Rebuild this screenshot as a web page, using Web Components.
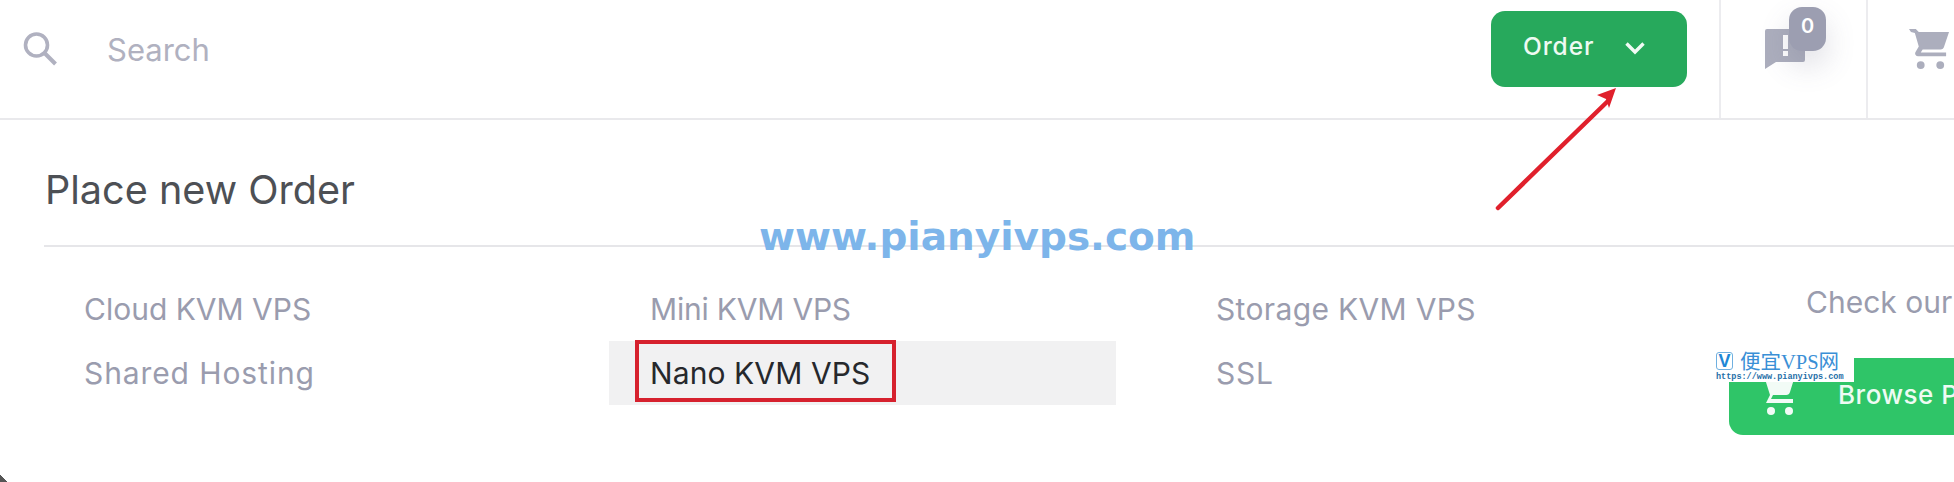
<!DOCTYPE html>
<html><head><meta charset="utf-8"><style>
html,body{margin:0;padding:0;background:#fff;overflow:hidden}
body{width:1954px;height:482px;position:relative;font-family:Inter,Roboto,"Liberation Sans",sans-serif}
</style></head><body>
<order-app></order-app>
<template id="t-app"><style>
:host{display:block;width:1954px;height:482px;position:relative;overflow:hidden;background:#fff}
.corner{position:absolute;left:0;bottom:0;width:8px;height:8px;background:linear-gradient(to top right,#555 0 45%,transparent 50%)}
</style>
<top-bar></top-bar>
<order-panel></order-panel>
<div class="corner"></div>
<annotation-layer></annotation-layer>
</template>

<template id="t-top"><style>
:host{display:flex;height:118px;border-bottom:2px solid #e9e9ec;align-items:stretch;font-family:Inter,Roboto,sans-serif}
.search{flex:1;display:flex;align-items:center;padding:0 0 20px 22px;gap:49px;color:#b0b1c0;font-size:31px}
.search svg{width:36px;height:36px;display:block}
.order{width:196px;height:76px;margin:11px 32px 0 0;border-radius:14px;background:#27a95c;color:#eefaf2;display:flex;align-items:center;box-sizing:border-box;padding:0 0 6px 32px;font-size:24.5px;font-weight:500;letter-spacing:.9px;gap:31px}
.order svg{width:20px;height:14px;margin-top:4px}
.cell{width:145px;border-left:2px solid #ececef;position:relative}
.cart-cell{width:86px;overflow:hidden}
.bubble{position:absolute;left:44px;top:29px;width:40px;height:40px}
.badge{position:absolute;left:68px;top:7px;width:37px;height:44px;border-radius:13px;background:#9c9eb1;color:#fff;font-size:20px;font-weight:600;display:flex;align-items:center;justify-content:center;box-shadow:0 14px 30px rgba(90,92,120,.2);padding-bottom:6px;box-sizing:border-box}
.cart{position:absolute;left:41px;top:28px;width:41px;height:41px}
</style>
<div class="search"><svg viewBox="0 0 36 36" fill="none" stroke="#b0b1c0" stroke-width="3.6"><circle cx="14.5" cy="14" r="11"/><path d="M22.5 22l11 11" stroke-width="4"/></svg><span>Search</span></div>
<div class="order"><span>Order</span><svg viewBox="0 0 20 14" fill="none" stroke="#f1fbf5" stroke-width="3.4"><path d="M1.5 2.5L10 11 18.5 2.5"/></svg></div>
<div class="cell"><svg class="bubble" viewBox="0 0 40 40"><path d="M2 0h36a2 2 0 0 1 2 2v29a2 2 0 0 1-2 2H11L0 40V2a2 2 0 0 1 2-2z" fill="#acaebd"/><rect x="18" y="6" width="5" height="14" fill="#fff"/><rect x="18" y="22" width="5" height="5" fill="#fff"/></svg><div class="badge">0</div></div>
<div class="cell cart-cell"><svg class="cart" viewBox="0 0 42 42"><path d="M0 1h7l3 3h31l-5 15a4 4 0 0 1-4 3H14l-2 3h26v4H9a3 3 0 0 1-2-5l3-5-4-14-4-1z" fill="#acaebd"/><circle cx="12" cy="38" r="4" fill="#acaebd"/><circle cx="32" cy="38" r="4" fill="#acaebd"/></svg></div>
</template>

<template id="t-panel"><style>
:host{display:block;padding:0 0 0 44px;width:1954px;box-sizing:border-box;font-family:Inter,Roboto,sans-serif}
h2{margin:0;padding:49px 0 34px 1px;font:400 39.6px/42px Inter,Roboto,sans-serif;color:#4d5055;border-bottom:2px solid #e6e6e9}
.body{display:flex;padding:30px 0 0 0}
.grid{display:grid;grid-template-columns:repeat(3,507px);column-gap:59px;grid-auto-rows:64px;margin-left:-1px;width:1686px;flex:none;align-self:flex-start}
</style>
<h2>Place new Order</h2>
<div class="body">
<div class="grid">
<menu-item>Cloud KVM VPS</menu-item><menu-item style="letter-spacing:-.2px">Mini KVM VPS</menu-item><menu-item style="letter-spacing:.35px">Storage KVM VPS</menu-item>
<menu-item style="letter-spacing:.9px">Shared Hosting</menu-item><menu-item active style="letter-spacing:.1px">Nano KVM VPS</menu-item><menu-item style="letter-spacing:.7px">SSL</menu-item>
</div>
<side-box></side-box>
</div>
</template>

<template id="t-item"><style>
:host{display:flex;align-items:center;padding-left:41px;font:400 30px/32px Inter,Roboto,sans-serif;color:#9a9cae;white-space:nowrap}
:host([active]){background:#f1f1f2;color:#26282c}
</style><slot></slot></template>

<template id="t-side"><style>
:host{display:flex;flex-direction:column;align-items:flex-start;flex:none;width:225px;overflow:hidden;padding-top:9px;font-family:Inter,Roboto,sans-serif}
.h{font-size:30px;line-height:32px;color:#9a9cae;margin:0 0 40px 77px;white-space:nowrap}
.btn{flex:none;width:260px;height:77px;border-radius:14px;background:#2fc568;color:#eefbf3;display:flex;align-items:center;font-size:26px;font-weight:500;gap:40px;padding-left:32px;box-sizing:border-box;white-space:nowrap;letter-spacing:.5px}
.btn span{margin-top:-4px}
svg{width:37px;height:40px;flex:none}
</style><div class="h">Check our</div><div class="btn"><svg viewBox="0 0 37 40"><path d="M4 2h29l-4 13a4 4 0 0 1-4 3H12l-2 4h22v4H5l4-8L4 2z" fill="#f2fbf6"/><circle cx="10" cy="34" r="4" fill="#f2fbf6"/><circle cx="28" cy="34" r="4" fill="#f2fbf6"/></svg><span>Browse P</span></div></template>

<template id="t-anno"><style>
:host{position:absolute;inset:0;display:block;pointer-events:none}
.arrow{position:absolute;left:0;top:0;width:1954px;height:482px}
.box{position:absolute;left:635px;top:340px;width:261px;height:62px;box-sizing:border-box;border:4px solid #d6212e}
.wm{position:absolute;left:759px;top:215px;font:700 39px/44px "DejaVu Sans",sans-serif;color:#7db5ea;white-space:nowrap}
.logo{position:absolute;left:1713px;top:348px;width:141px;height:34px;background:#fff;font-family:"Noto Sans CJK SC",sans-serif}
.v{position:absolute;left:3px;top:4px;width:17px;height:18px;border:1px solid #6fb0e0;border-radius:3px;color:#1d87d6;font:700 18px/17px "Liberation Sans",sans-serif;text-align:center;box-sizing:border-box}
.n{position:absolute;left:27px;top:2px;font:400 20.5px/24px "Liberation Serif","Noto Sans CJK SC",serif;color:#3a8fd6;white-space:nowrap}
.u{position:absolute;left:3px;top:24px;font:700 8.5px/10px "Liberation Mono",monospace;color:#1f6fa8;white-space:nowrap;letter-spacing:0}
</style>
<svg class="arrow" viewBox="0 0 1954 482"><path d="M1498 208L1608 101" stroke="#e0202c" stroke-width="4.5" stroke-linecap="round"/><path d="M1616 88L1597 95 1606 99 1609 108z" fill="#e0202c"/></svg>
<div class="box"></div>
<div class="wm">www.pianyivps.com</div>
<div class="logo"><div class="v">V</div><div class="n">便宜VPS网</div><div class="u">https://www.pianyivps.com</div></div>
</template>
<script>
function def(tag,id){customElements.define(tag,class extends HTMLElement{constructor(){super();this.attachShadow({mode:'open'}).appendChild(document.getElementById(id).content.cloneNode(true));}});}
def('menu-item','t-item');def('side-box','t-side');def('annotation-layer','t-anno');def('top-bar','t-top');def('order-panel','t-panel');def('order-app','t-app');
</script>
</body></html>
